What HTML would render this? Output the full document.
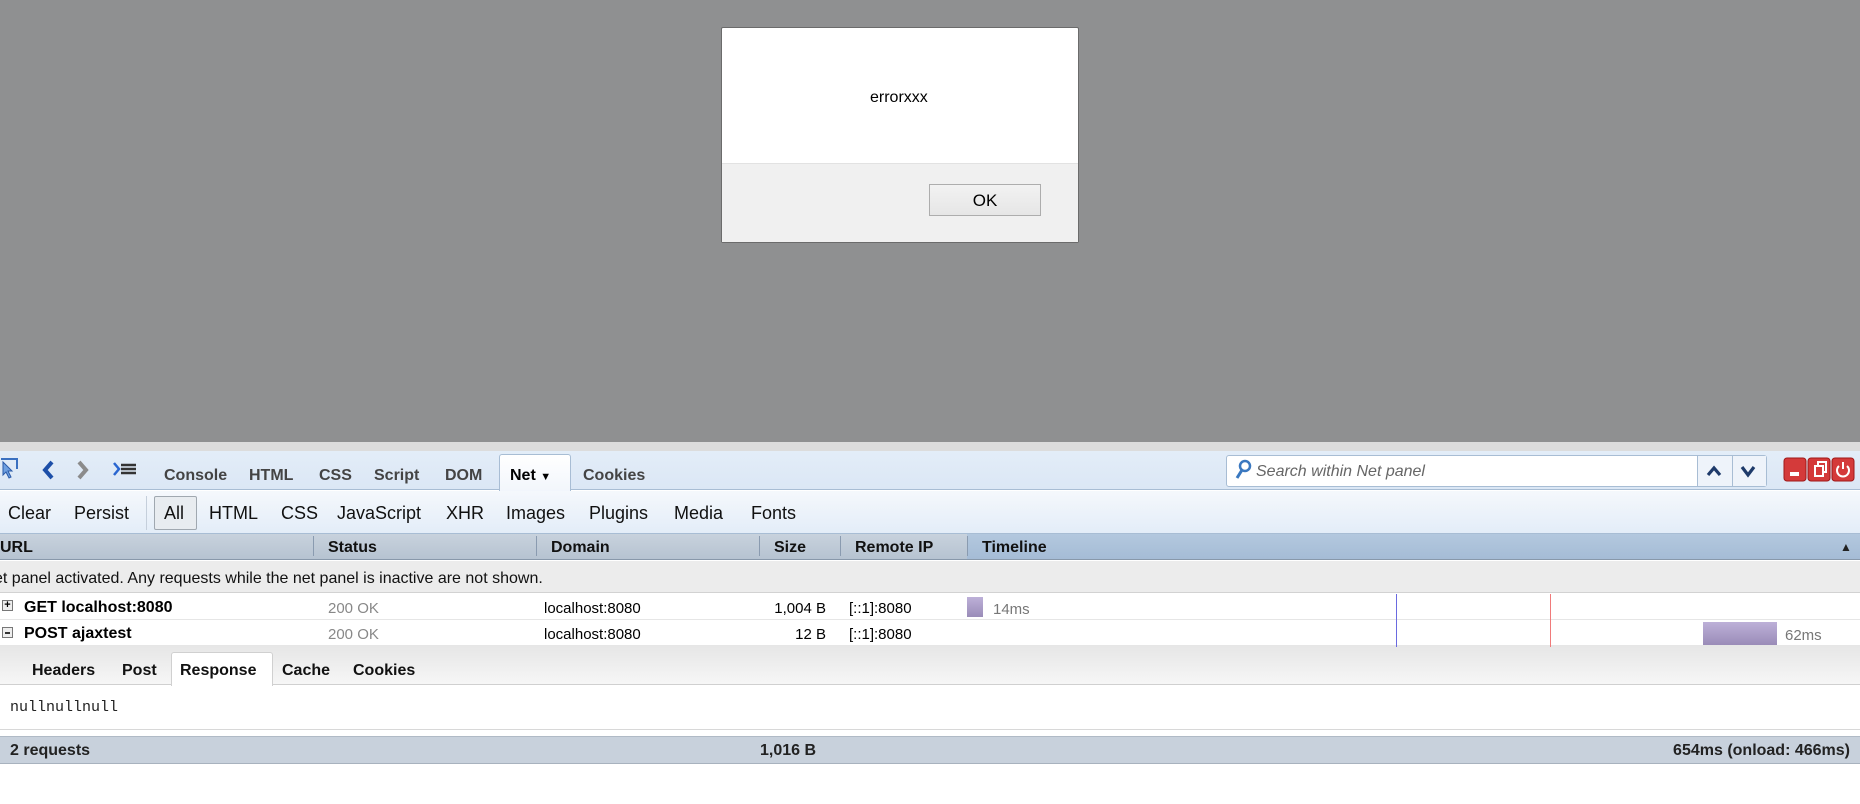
<!DOCTYPE html>
<html><head><meta charset="utf-8"><style>
*{margin:0;padding:0;box-sizing:border-box}
body{width:1860px;height:804px;overflow:hidden;position:relative;background:#fff;font-family:"Liberation Sans",sans-serif}
.a{position:absolute;white-space:nowrap}
.tb{font-weight:bold;font-size:16px;color:#444;top:467px}
.fl{font-size:18px;color:#111;top:503px}
.hd{font-weight:bold;font-size:16px;color:#111;top:539px}
.sep{position:absolute;top:536px;width:1px;height:20px;background:#8a9bb0}
.dt{font-weight:bold;font-size:16px;color:#111;top:662px}
</style></head><body>
<div class="a" style="left:0;top:0;width:1860px;height:442px;background:#8f9091"></div>
<div class="a" style="left:721px;top:27px;width:358px;height:216px;background:#fff;border:1px solid #6b6b6b;border-radius:2px"></div>
<div class="a" style="left:722px;top:163px;width:356px;height:79px;background:#f0f0f0;border-top:1px solid #e2e2e2"></div>
<div class="a" style="left:870px;top:89px;font-size:16px;color:#000">errorxxx</div>
<div class="a" style="left:929px;top:184px;width:112px;height:32px;background:linear-gradient(#f2f2f2,#e6e6e6);border:1px solid #adadad;font-size:17px;text-align:center;line-height:31px;color:#000">OK</div>

<div class="a" style="left:0;top:442px;width:1860px;height:9px;background:#dcdcdc"></div>
<div class="a" style="left:0;top:451px;width:1860px;height:39px;background:linear-gradient(#e3edf8,#dbe7f5);border-bottom:1px solid #a8bdd4"></div>
<svg class="a" style="left:0;top:455px" width="160" height="30">
<path d="M1 4h16v10" fill="none" stroke="#3a70c0" stroke-width="2"/>
<path d="M3 7l9 9-4 0 3 6-2 1-3-6-3 3z" fill="#6fa0e0" stroke="#2a5aa8"/>
<path d="M52 7l-7 8 7 8" fill="none" stroke="#1d4fa8" stroke-width="4"/>
<path d="M79 7l7 8-7 8" fill="none" stroke="#8b8b8b" stroke-width="4"/>
<path d="M114 8l5 6-5 6" fill="none" stroke="#2a66d0" stroke-width="2.5"/>
<path d="M121 10h15M121 14h15M121 18h15" stroke="#333" stroke-width="2.4"/>
</svg>
<div class="a tb" style="left:164px">Console</div>
<div class="a tb" style="left:249px">HTML</div>
<div class="a tb" style="left:319px">CSS</div>
<div class="a tb" style="left:374px">Script</div>
<div class="a tb" style="left:445px">DOM</div>
<div class="a" style="left:499px;top:454px;width:72px;height:38px;background:linear-gradient(#fff,#f2f6fc);border:1px solid #a8bdd4;border-bottom:none;border-radius:3px 3px 0 0"></div>
<div class="a tb" style="left:510px;color:#000">Net <span style="font-size:11px">▼</span></div>
<div class="a tb" style="left:583px">Cookies</div>
<div class="a" style="left:1226px;top:455px;width:541px;height:32px;background:#fff;border:1px solid #a8bdd4;border-radius:3px"></div>
<div class="a" style="left:1698px;top:456px;width:68px;height:30px;background:#eef3fa"></div>
<div class="a" style="left:1697px;top:456px;width:1px;height:30px;background:#a8bdd4"></div>
<div class="a" style="left:1732px;top:456px;width:1px;height:30px;background:#a8bdd4"></div>
<svg class="a" style="left:1234px;top:459px" width="540" height="26">
<circle cx="11" cy="7" r="5" fill="none" stroke="#3a78c0" stroke-width="2.5"/><path d="M8 11l-5 8" stroke="#3a78c0" stroke-width="3"/>
<path d="M474 16l6-7 6 7M508 8l6 8 6-8" fill="none" stroke="#1e3a6a" stroke-width="3.2"/>
</svg>
<div class="a" style="left:1256px;top:463px;font-size:16px;font-style:italic;color:#666">Search within Net panel</div>
<svg class="a" style="left:1783px;top:457px" width="74" height="26">
<g fill="#d43a3a" stroke="#a01818"><rect x="1" y="1" width="22" height="23" rx="3"/><rect x="25" y="1" width="22" height="23" rx="3"/><rect x="49" y="1" width="22" height="23" rx="3"/></g>
<rect x="7" y="15" width="9" height="4" fill="#fff"/>
<rect x="32" y="9" width="8" height="10" fill="none" stroke="#fff" stroke-width="2"/><path d="M35 9V5h8v10h-3" fill="none" stroke="#fff" stroke-width="2"/>
<path d="M56 9a6 6 0 1 0 8 0" fill="none" stroke="#fff" stroke-width="2"/><path d="M60 5v7" stroke="#fff" stroke-width="2"/>
</svg>

<div class="a" style="left:0;top:491px;width:1860px;height:43px;background:linear-gradient(#f5f8fc,#e3edf8);border-bottom:1px solid #a8bdd4"></div>
<div class="a fl" style="left:8px">Clear</div>
<div class="a fl" style="left:74px">Persist</div>
<div class="a" style="left:146px;top:496px;width:1px;height:34px;background:#c5cfdb"></div>
<div class="a" style="left:154px;top:496px;width:43px;height:34px;background:#e8ecf0;border:1px solid #a0a8b0;border-radius:2px"></div>
<div class="a fl" style="left:164px">All</div>
<div class="a fl" style="left:209px">HTML</div>
<div class="a fl" style="left:281px">CSS</div>
<div class="a fl" style="left:337px">JavaScript</div>
<div class="a fl" style="left:446px">XHR</div>
<div class="a fl" style="left:506px">Images</div>
<div class="a fl" style="left:589px">Plugins</div>
<div class="a fl" style="left:674px">Media</div>
<div class="a fl" style="left:751px">Fonts</div>

<div class="a" style="left:0;top:534px;width:1860px;height:26px;background:linear-gradient(#c8d2dd,#b6c3d1);border-bottom:1px solid #8898aa"></div>
<div class="a" style="left:967px;top:534px;width:893px;height:26px;background:linear-gradient(#b3c8de,#a5bcd6);border-bottom:1px solid #8898aa"></div>
<div class="a hd" style="left:0">URL</div>
<div class="sep" style="left:313px"></div><div class="a hd" style="left:328px">Status</div>
<div class="sep" style="left:536px"></div><div class="a hd" style="left:551px">Domain</div>
<div class="sep" style="left:759px"></div><div class="a hd" style="left:774px">Size</div>
<div class="sep" style="left:840px"></div><div class="a hd" style="left:855px">Remote IP</div>
<div class="sep" style="left:967px"></div><div class="a hd" style="left:982px">Timeline</div>
<div class="a" style="left:1840px;top:540px;font-size:12px;color:#222">▲</div>

<div class="a" style="left:0;top:561px;width:1860px;height:32px;background:#ececec;border-bottom:1px solid #d2d2d2"></div>
<div class="a" style="left:-6px;top:570px;font-size:16px;color:#111">et panel activated. Any requests while the net panel is inactive are not shown.</div>

<div class="a" style="left:0;top:619px;width:1860px;height:1px;background:#e6e6e6"></div>
<div class="a" style="left:0;top:645px;width:1860px;height:40px;background:linear-gradient(#e6e6e6,#f6f6f6);border-bottom:1px solid #d0d0d0"></div>
<div class="a" style="left:1396px;top:594px;width:1px;height:53px;background:#6a6ae0"></div>
<div class="a" style="left:1550px;top:594px;width:1px;height:53px;background:#f07a7a"></div>
<div class="a" style="left:2px;top:600px;width:11px;height:11px;border:1px solid #777;background:#eee;font-size:11px;line-height:8px;text-align:center;font-weight:bold">+</div>
<div class="a" style="left:24px;top:599px;font-size:16px;font-weight:bold">GET localhost:8080</div>
<div class="a" style="left:328px;top:600px;font-size:15px;color:#888">200 OK</div>
<div class="a" style="left:544px;top:600px;font-size:15px">localhost:8080</div>
<div class="a" style="left:770px;top:600px;width:56px;text-align:right;font-size:15px">1,004 B</div>
<div class="a" style="left:849px;top:600px;font-size:15px">[::1]:8080</div>
<div class="a" style="left:967px;top:597px;width:16px;height:20px;background:linear-gradient(#bdb0d8,#9a8cb8)"></div>
<div class="a" style="left:993px;top:601px;font-size:15px;color:#777">14ms</div>
<div class="a" style="left:2px;top:627px;width:11px;height:11px;border:1px solid #777;background:#eee"><div style="margin:4px 2px;height:2px;background:#333"></div></div>
<div class="a" style="left:24px;top:625px;font-size:16px;font-weight:bold">POST ajaxtest</div>
<div class="a" style="left:328px;top:626px;font-size:15px;color:#888">200 OK</div>
<div class="a" style="left:544px;top:626px;font-size:15px">localhost:8080</div>
<div class="a" style="left:770px;top:626px;width:56px;text-align:right;font-size:15px">12 B</div>
<div class="a" style="left:849px;top:626px;font-size:15px">[::1]:8080</div>
<div class="a" style="left:1703px;top:622px;width:74px;height:23px;background:linear-gradient(#bdb0d8,#9a8cb8)"></div>
<div class="a" style="left:1785px;top:627px;font-size:15px;color:#777">62ms</div>

<div class="a" style="left:171px;top:652px;width:102px;height:34px;background:#fff;border:1px solid #d0d0d0;border-bottom:none;border-radius:3px 3px 0 0"></div>
<div class="a dt" style="left:32px">Headers</div>
<div class="a dt" style="left:122px">Post</div>
<div class="a dt" style="left:180px">Response</div>
<div class="a dt" style="left:282px">Cache</div>
<div class="a dt" style="left:353px">Cookies</div>
<div class="a" style="left:10px;top:699px;font-family:'Courier New','Liberation Mono',monospace;font-size:15px;color:#222">nullnullnull</div>
<div class="a" style="left:0;top:729px;width:1860px;height:1px;background:#d8d8d8"></div>
<div class="a" style="left:0;top:736px;width:1860px;height:28px;background:#c8d1dc;border-top:1px solid #b0bac6;border-bottom:1px solid #a8b2be"></div>
<div class="a" style="left:10px;top:742px;font-size:16px;font-weight:bold;color:#222">2 requests</div>
<div class="a" style="left:760px;top:742px;font-size:16px;font-weight:bold;color:#222">1,016 B</div>
<div class="a" style="right:10px;top:742px;font-size:16px;font-weight:bold;color:#222">654ms (onload: 466ms)</div>
</body></html>
